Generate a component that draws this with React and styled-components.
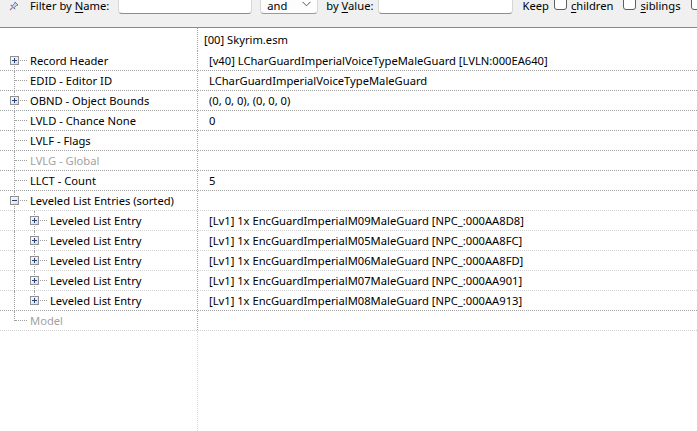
import React from "react";
import styled, { createGlobalStyle } from "styled-components";

const GlobalStyle = createGlobalStyle`
  html, body {
    margin: 0;
    padding: 0;
    background: #fff;
  }
  body {
    font-family: "Noto Sans", "Open Sans", sans-serif;
    font-size: 11.2px;
    color: #000;
  }
`;

const Window = styled.div`
  height: 100vh;
  display: flex;
  flex-direction: column;
  overflow: hidden;
`;

const Toolbar = styled.div`
  flex: none;
  height: 27px;
  background: #f0f0f0;
  border-bottom: 1px solid #8a8a8a;
  overflow: hidden;
`;

const ToolbarRow = styled.div`
  display: flex;
  align-items: center;
  height: 21px;
  margin-top: -7px;
  padding-left: 9px;
  white-space: nowrap;
`;

const Label = styled.span`
  margin-left: ${(p) => p.$gap || 0}px;
  padding-top: 4px;
  line-height: 17px;
`;

const Mnemonic = styled.u`
  text-underline-offset: 2px;
`;

const TextInput = styled.div`
  margin-left: ${(p) => p.$gap || 0}px;
  width: ${(p) => p.$width}px;
  height: 21px;
  box-sizing: border-box;
  background: #fff;
  border: 1px solid #d6d6d6;
  border-bottom-color: #8e8e8e;
  border-radius: 4px;
  flex: none;
`;

const Select = styled.div`
  margin-left: ${(p) => p.$gap || 0}px;
  width: 58px;
  height: 21px;
  box-sizing: border-box;
  background: #fdfdfd;
  border: 1px solid #d6d6d6;
  border-bottom-color: #9a9a9a;
  border-radius: 4px;
  display: flex;
  align-items: center;
  justify-content: space-between;
  padding: 4px 6px 0 6px;
  flex: none;
`;

const Check = styled.span`
  margin-left: ${(p) => p.$gap || 0}px;
  width: 13px;
  height: 13px;
  box-sizing: border-box;
  border: 1px solid #5f5f5f;
  border-radius: 3px;
  background: #fff;
  margin-top: -1px;
  flex: none;
`;

const Grid = styled.div`
  flex: 1;
  display: flex;
  flex-direction: column;
  background: #fff;
`;

const Row = styled.div`
  display: flex;
  height: ${(p) => (p.$head ? 23 : 20)}px;
  box-sizing: border-box;
  border-bottom: ${(p) =>
    p.$head ? "none" : `1px dotted ${p.$light ? "#d2d2d2" : "#a3a3a3"}`};
`;

const NameCell = styled.div`
  width: 198px;
  flex: none;
  box-sizing: border-box;
  border-right: 1px dotted #a3a3a3;
  display: flex;
  align-items: stretch;
  padding-left: 4px;
  color: ${(p) => (p.$dim ? "#a2a2a2" : "#000")};
`;

const ValueCell = styled.div`
  flex: 1;
  display: flex;
  align-items: center;
  padding-left: ${(p) => (p.$head ? 6 : 11)}px;
  white-space: nowrap;
  overflow: hidden;
`;

const Guide = styled.div`
  position: relative;
  width: 20px;
  flex: none;

  &::before {
    content: "";
    display: ${(p) => (p.$vertical ? "block" : "none")};
    position: absolute;
    left: 10px;
    top: ${(p) => (p.$first ? 10 : 0)}px;
    bottom: ${(p) => (p.$last ? 9 : -1)}px;
    border-left: 1px dotted #a0a0a0;
  }

  &::after {
    content: "";
    display: ${(p) => (p.$branch ? "block" : "none")};
    position: absolute;
    left: 11px;
    width: 12px;
    top: 9px;
    border-top: 1px dotted #a0a0a0;
  }
`;

const Toggle = styled.svg`
  position: absolute;
  left: 6px;
  top: 5px;
  z-index: 1;
`;

const NameText = styled.span`
  margin-left: 6px;
  display: flex;
  align-items: center;
  white-space: nowrap;
`;

const Filler = styled.div`
  flex: 1;
  display: flex;
`;

const FillerName = styled.div`
  width: 198px;
  box-sizing: border-box;
  border-right: 1px dotted #dadada;
`;

function PinIcon() {
  return (
    <svg width="10" height="10" viewBox="0 0 10 10" style={{ marginTop: 4, flex: "none" }}>
      <path d="M6 1 L9 4 L7.5 4.5 L5.5 6.5 L5.8 8.2 L1.8 4.2 L3.5 4.5 L5.5 2.5 Z" fill="#c9d3ea" stroke="#51649a" strokeWidth="0.8" />
      <path d="M3.6 6.4 L1 9" stroke="#d05a7a" strokeWidth="1.1" />
    </svg>
  );
}

function Chevron() {
  return (
    <svg width="9" height="6" viewBox="0 0 9 6" style={{ marginTop: -3 }}>
      <path d="M0.5 0.8 L4.5 4.8 L8.5 0.8" fill="none" stroke="#555" strokeWidth="1" />
    </svg>
  );
}

function ExpandBox({ open }) {
  return (
    <Toggle width="9" height="9" viewBox="0 0 9 9">
      <defs>
        <linearGradient id="boxfill" x1="0" y1="0" x2="1" y2="1">
          <stop offset="0" stopColor="#ffffff" />
          <stop offset="1" stopColor="#dcdcdc" />
        </linearGradient>
      </defs>
      <rect x="0.5" y="0.5" width="8" height="8" fill="url(#boxfill)" stroke="#919191" />
      <path d="M2 4.5 H7" stroke="#27407e" strokeWidth="1" />
      {!open && <path d="M4.5 2 V7" stroke="#27407e" strokeWidth="1" />}
    </Toggle>
  );
}

const rows = [
  { name: "Record Header", value: "[v40] LCharGuardImperialVoiceTypeMaleGuard [LVLN:000EA640]", toggle: "plus", first: true },
  { name: "EDID - Editor ID", value: "LCharGuardImperialVoiceTypeMaleGuard" },
  { name: "OBND - Object Bounds", value: "(0, 0, 0), (0, 0, 0)", toggle: "plus" },
  { name: "LVLD - Chance None", value: "0" },
  { name: "LVLF - Flags", value: "" },
  { name: "LVLG - Global", value: "", dim: true },
  { name: "LLCT - Count", value: "5" },
  { name: "Leveled List Entries (sorted)", value: "", toggle: "minus", light: true },
  { name: "Leveled List Entry", value: "[Lv1] 1x EncGuardImperialM09MaleGuard [NPC_:000AA8D8]", toggle: "plus", depth: 1, light: true },
  { name: "Leveled List Entry", value: "[Lv1] 1x EncGuardImperialM05MaleGuard [NPC_:000AA8FC]", toggle: "plus", depth: 1, light: true },
  { name: "Leveled List Entry", value: "[Lv1] 1x EncGuardImperialM06MaleGuard [NPC_:000AA8FD]", toggle: "plus", depth: 1, light: true },
  { name: "Leveled List Entry", value: "[Lv1] 1x EncGuardImperialM07MaleGuard [NPC_:000AA901]", toggle: "plus", depth: 1, light: true },
  { name: "Leveled List Entry", value: "[Lv1] 1x EncGuardImperialM08MaleGuard [NPC_:000AA913]", toggle: "plus", depth: 1, last: true },
  { name: "Model", value: "", dim: true, last: true, light: true },
];

function TreeRow({ row }) {
  const depth = row.depth || 0;
  return (
    <Row $light={row.light}>
      <NameCell $dim={row.dim}>
        {depth > 0 && <Guide $vertical />}
        <Guide $vertical $branch $first={row.first} $last={row.last}>
          {row.toggle && <ExpandBox open={row.toggle === "minus"} />}
        </Guide>
        <NameText>{row.name}</NameText>
      </NameCell>
      <ValueCell>{row.value}</ValueCell>
    </Row>
  );
}

export default function App() {
  return (
    <>
      <GlobalStyle />
      <Window>
        <Toolbar>
          <ToolbarRow>
            <PinIcon />
            <Label $gap={11}>
              Filter by <Mnemonic>N</Mnemonic>ame:
            </Label>
            <TextInput $gap={9} $width={134} />
            <Select $gap={8}>
              <span>and</span>
              <Chevron />
            </Select>
            <Label $gap={8}>
              by <Mnemonic>V</Mnemonic>alue:
            </Label>
            <TextInput $gap={5} $width={135} />
            <Label $gap={9}>Keep</Label>
            <Check $gap={5} />
            <Label $gap={4}>
              <Mnemonic>c</Mnemonic>hildren
            </Label>
            <Check $gap={10} />
            <Label $gap={4}>
              <Mnemonic>s</Mnemonic>iblings
            </Label>
            <Check $gap={10} />
          </ToolbarRow>
        </Toolbar>
        <Grid>
          <Row $head>
            <NameCell />
            <ValueCell $head>[00] Skyrim.esm</ValueCell>
          </Row>
          {rows.map((row, i) => (
            <TreeRow key={i} row={row} />
          ))}
          <Filler>
            <FillerName />
          </Filler>
        </Grid>
      </Window>
    </>
  );
}
